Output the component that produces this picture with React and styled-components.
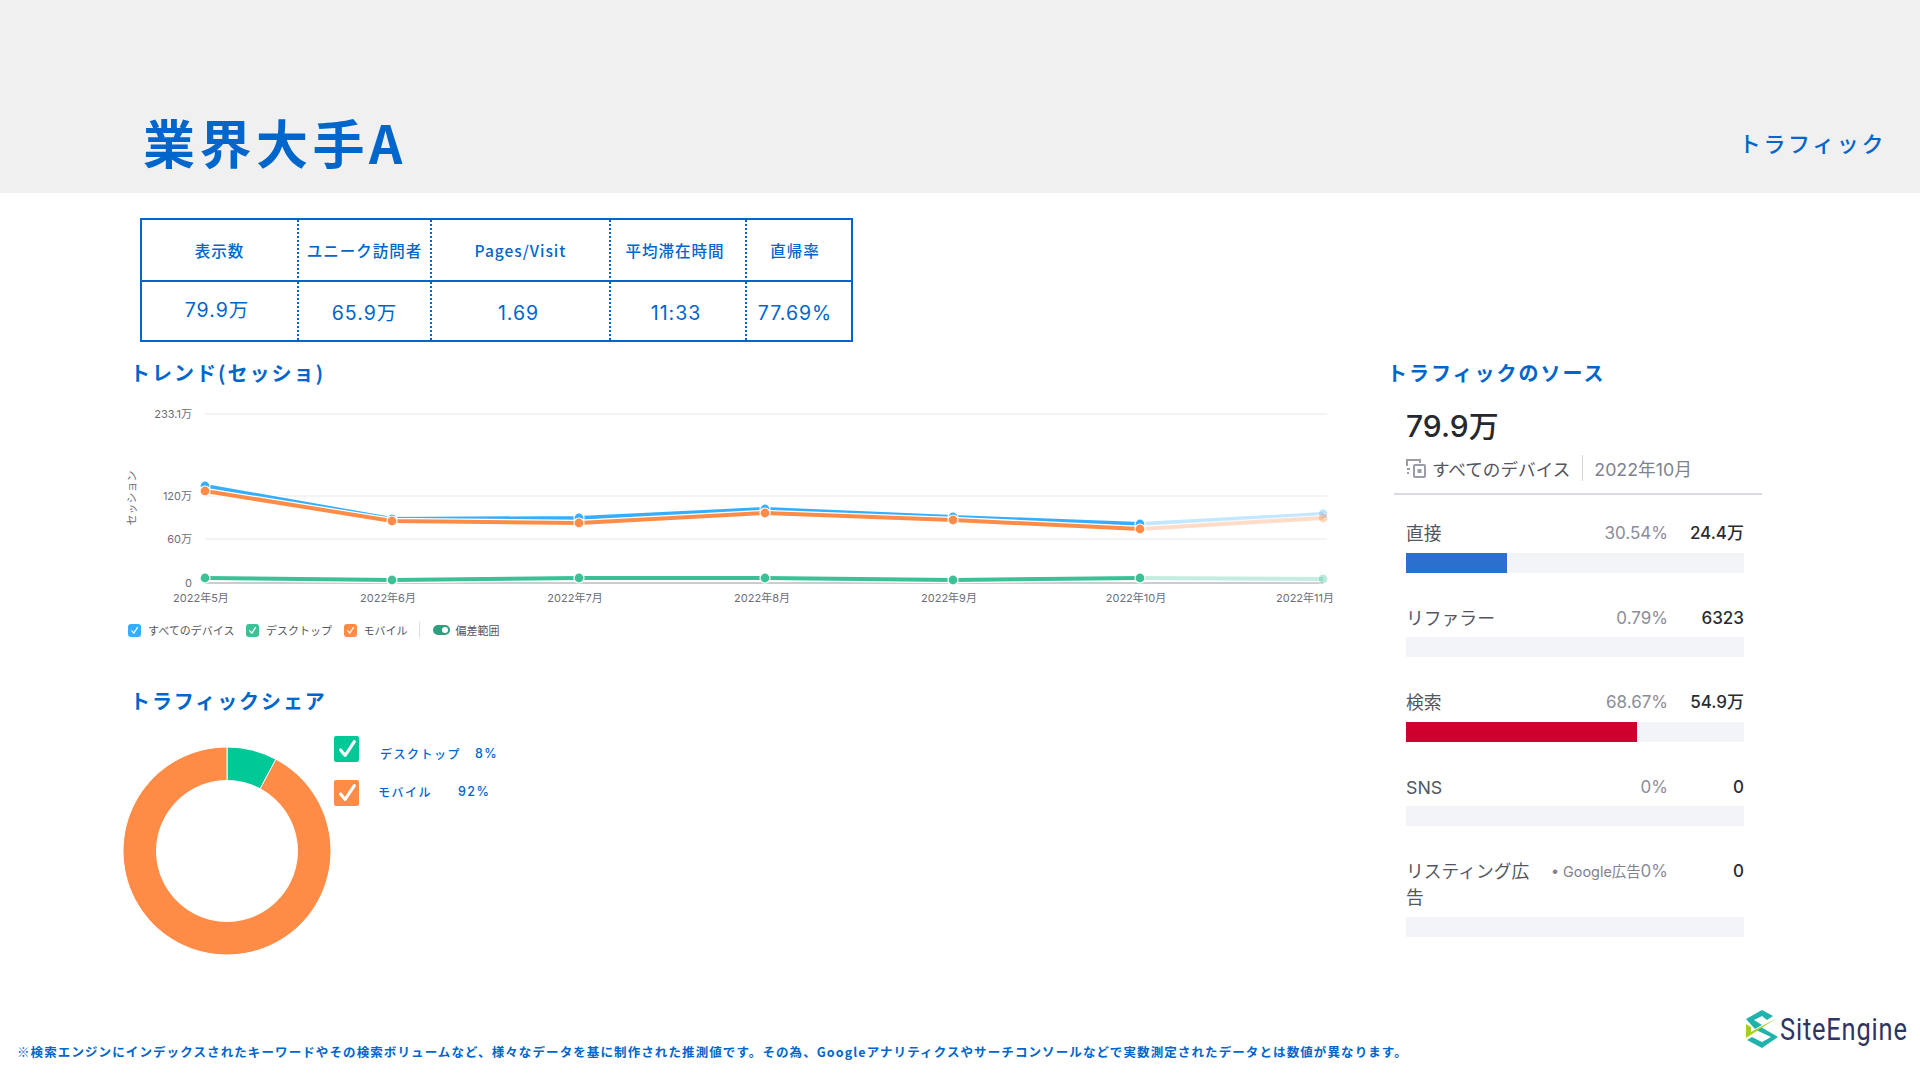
import React from "react";
import styled, { createGlobalStyle } from "styled-components";

const BLUE = "#0066cc";
const CJK = `"Noto Sans CJK JP"`;
const UI = `Inter, "Noto Sans CJK JP", sans-serif`;

const Global = createGlobalStyle`
  html, body { margin: 0; padding: 0; background: #fff; }
  body { font-family: ${CJK}, sans-serif; }
  #root { width: 1920px; height: 1080px; overflow: hidden; }
`;

const Page = styled.div`
  width: 1920px;
  height: 1080px;
  display: flex;
  flex-direction: column;
  background: #fff;
  color: ${BLUE};
`;

const Header = styled.header`
  height: 193px;
  flex: none;
  background: #f0f0f0;
  padding: 0 34px 0 143px;
  box-sizing: border-box;
  display: flex;
  align-items: flex-end;
  justify-content: space-between;
`;
const Title = styled.h1`
  margin: 0 0 21px;
  font-size: 52px;
  line-height: 60px;
  letter-spacing: 4.5px;
  font-weight: 700;
`;
const HeaderTag = styled.div`
  margin-bottom: 35px;
  font-size: 22px;
  line-height: 32px;
  letter-spacing: 2.6px;
  font-weight: 500;
`;

const Metrics = styled.div`
  margin: 25px 0 0 140px;
  width: 713px;
  height: 124px;
  flex: none;
  box-sizing: border-box;
  border: 2px solid ${BLUE};
  display: grid;
  grid-template-columns: 155px 133px 179px 136px 1fr;
  grid-template-rows: 62px 1fr;
`;
const HeadCell = styled.div`
  display: flex;
  align-items: center;
  justify-content: center;
  font-size: 15.5px;
  font-weight: 500;
  letter-spacing: 1px;
  padding-right: ${(p) => p.$shift || 0}px;
  border-bottom: 2px solid ${BLUE};
  border-left: ${(p) => (p.$first ? "none" : `2px dotted ${BLUE}`)};
`;
const ValueCell = styled.div`
  display: flex;
  align-items: center;
  justify-content: center;
  font-family: ${UI};
  font-size: 19.5px;
  letter-spacing: 1px;
  padding-bottom: ${(p) => p.$lift || 0}px;
  padding-top: ${(p) => p.$drop || 0}px;
  padding-right: ${(p) => p.$shift || 0}px;
  box-sizing: border-box;
  border-left: ${(p) => (p.$first ? "none" : `2px dotted ${BLUE}`)};
`;

const Main = styled.div`
  display: flex;
  margin-top: 15px;
  flex: 1;
  min-height: 0;
`;
const LeftCol = styled.div`
  width: 1387px;
  flex: none;
  box-sizing: border-box;
  padding-left: 126px;
`;
const RightCol = styled.div`
  width: 400px;
  flex: none;
`;
const SectionTitle = styled.h2`
  margin: 0;
  font-size: 20px;
  line-height: 32px;
  font-weight: 600;
  letter-spacing: ${(p) => p.$ls || 1}px;
  padding-left: ${(p) => p.$indent || 0}px;
`;

const ChartSvg = styled.svg`
  display: block;
  width: 1220px;
  height: 219px;
  margin-top: 8px;
  font-family: ${UI};
`;
const Legend = styled.div`
  display: flex;
  align-items: center;
  margin-top: 4px;
  height: 20px;
  padding-left: 2px;
  font-family: ${UI};
  font-size: 11px;
  color: #54565f;
`;
const LegendItem = styled.div`
  display: flex;
  align-items: center;
  gap: ${(p) => p.$gap || 6.5}px;
  margin-right: 12px;
`;
const LegendBox = styled.span`
  width: 13px;
  height: 13px;
  border-radius: 3px;
  background: ${(p) => p.$color};
  display: inline-flex;
  align-items: center;
  justify-content: center;
`;
const LegendDivider = styled.span`
  width: 1px;
  height: 16px;
  background: #dcdee3;
  margin-right: 13px;
`;
const Toggle = styled.span`
  width: 17px;
  height: 10px;
  border-radius: 5px;
  background: #2f9e7e;
  position: relative;
  &::after {
    content: "";
    position: absolute;
    right: 2px;
    top: 2px;
    width: 6px;
    height: 6px;
    border-radius: 50%;
    background: #fff;
  }
`;

const ShareSection = styled.div`
  margin-top: 45px;
`;
const ShareBody = styled.div`
  display: flex;
  margin-left: -4px;
`;
const Donut = styled.svg`
  display: block;
  width: 210px;
  height: 210px;
  margin-top: 29px;
  flex: none;
`;
const ShareLegend = styled.div`
  margin-left: 2px;
  margin-top: 19px;
  display: flex;
  flex-direction: column;
  gap: 18px;
`;
const ShareRow = styled.div`
  display: flex;
  align-items: center;
  height: 26px;
  font-size: 12px;
  font-weight: 500;
  letter-spacing: 1.5px;
`;
const ShareBox = styled.span`
  width: 25px;
  height: 26px;
  border-radius: 2px;
  background: ${(p) => p.$color};
  display: inline-flex;
  align-items: center;
  justify-content: center;
  flex: none;
`;
const ShareName = styled.span`
  margin-left: ${(p) => p.$gap}px;
  width: ${(p) => p.$w}px;
  position: relative;
  top: ${(p) => p.$dy}px;
`;
const SharePct = styled.span`
  font-family: ${UI};
  font-size: 12.5px;
  position: relative;
  top: ${(p) => p.$dy}px;
`;

const Panel = styled.div`
  margin-top: 17px;
  width: 368px;
  margin-left: 7px;
`;
const PanelHead = styled.div`
  padding: 0 12px 11px;
  border-bottom: 2px solid #d9dbe1;
`;
const BigValue = styled.div`
  font-family: ${UI};
  font-size: 30px;
  line-height: 40px;
  font-weight: 550;
  color: #26282e;
`;
const SubRow = styled.div`
  display: flex;
  align-items: center;
  margin-top: 8px;
  height: 28px;
  font-family: ${UI};
  font-size: 17.6px;
`;
const DeviceName = styled.span`
  color: #54565f;
  margin-left: 6px;
`;
const SubDivider = styled.span`
  width: 1px;
  height: 26px;
  background: #d4d6dc;
  margin: 0 11px 0 12px;
`;
const Period = styled.span`
  color: #7f8290;
  font-size: 17.8px;
`;
const Rows = styled.div`
  padding: 0 18px 0 12px;
  margin-top: 26px;
`;
const SourceRow = styled.div`
  margin-bottom: 33px;
`;
const SourceHead = styled.div`
  display: grid;
  grid-template-columns: 126px 1fr 76px;
  font-family: ${UI};
  font-size: 17px;
  line-height: 25.6px;
  align-items: start;
`;
const SourceName = styled.div`
  color: #54565f;
  font-size: 17.8px;
`;
const SourcePct = styled.div`
  color: #8b8d99;
  text-align: right;
  display: flex;
  justify-content: flex-end;
  align-items: baseline;
`;
const SubSource = styled.span`
  font-size: 14.4px;
  color: #7f8290;
  flex: 1;
  text-align: right;
  white-space: nowrap;
`;
const SourceValue = styled.div`
  color: #2a2c33;
  font-weight: 450;
  text-align: right;
`;
const Track = styled.div`
  height: 20px;
  background: #f3f4f8;
  margin-top: 6px;
`;
const Fill = styled.div`
  height: 100%;
  background: ${(p) => p.$color};
`;

const Footer = styled.div`
  height: 80px;
  flex: none;
  display: flex;
  align-items: flex-start;
  justify-content: space-between;
`;
const Note = styled.div`
  margin: 43px 0 0 17px;
  font-size: 12.5px;
  line-height: 18px;
  font-weight: 700;
  letter-spacing: 1.1px;
  white-space: nowrap;
`;
const Logo = styled.div`
  display: flex;
  align-items: center;
  gap: 0;
  margin-top: 9px;
  width: 175px;
  flex: none;
`;
const LogoIcon = styled.svg`
  flex: none;
  display: block;
`;
const LogoText = styled.span`
  font-family: Roboto, sans-serif;
  font-size: 31px;
  line-height: 40px;
  letter-spacing: 1px;
  color: #2d3560;
  display: inline-block;
  transform: scaleX(0.82);
  transform-origin: left center;
  white-space: nowrap;
`;

const xs = [205, 392, 579, 765, 953, 1140, 1323].map((x) => x - 126);
const Y = (y) => y - 396;
const series = [
  { c: "#36aeff", ys: [485, 518, 517, 508, 516, 523, 513] },
  { c: "#ff8c46", ys: [490, 520, 522, 512, 519, 528, 517] },
  { c: "#3cc096", ys: [577, 579, 577, 577, 579, 577, 578] },
];
const gridLines = [
  { y: 413, label: "233.1万" },
  { y: 495, label: "120万" },
  { y: 538, label: "60万" },
];
const xLabels = [
  [201, "2022年5月"],
  [388, "2022年6月"],
  [575, "2022年7月"],
  [762, "2022年8月"],
  [949, "2022年9月"],
  [1136, "2022年10月"],
  [1305, "2022年11月"],
];

const Check = ({ size, sw = 2 }) => (
  <svg width={size} height={size} viewBox="0 0 24 24" fill="none" stroke="#fff" strokeWidth={sw} strokeLinecap="round" strokeLinejoin="round">
    <path d="M5 13l5 6L20 4" />
  </svg>
);

function TrendChart() {
  const pts = (s, a, b) => s.ys.slice(a, b).map((y, i) => `${xs[a + i]},${Y(y)}`).join(" ");
  return (
    <ChartSvg viewBox="0 0 1220 219">
      {gridLines.map((g) => (
        <g key={g.y}>
          <line x1="79" x2="1201" y1={Y(g.y)} y2={Y(g.y)} stroke="#eef1f3" strokeWidth="1.5" />
          <text x="66" y={Y(g.y) + 4} textAnchor="end" fontSize="11" fill="#6c6e79">{g.label}</text>
        </g>
      ))}
      <line x1="79" x2="1197" y1={Y(582)} y2={Y(582)} stroke="#c9cdd1" strokeWidth="2" />
      <text x="66" y={Y(582) + 4} textAnchor="end" fontSize="11" fill="#6c6e79">0</text>
      <text transform={`translate(6 ${Y(497)}) rotate(-90)`} textAnchor="middle" dominantBaseline="central" fontSize="11" fill="#6c6e79">セッション</text>
      {xLabels.map(([x, t]) => (
        <text key={t} x={x - 126} y={Y(601)} textAnchor="middle" fontSize="11" fill="#6c6e79">{t}</text>
      ))}
      {series.map((s) => (
        <g key={s.c}>
          <polyline points={pts(s, 5, 7)} fill="none" stroke="#fff" strokeWidth="6.5" opacity="0.7" />
          <polyline points={pts(s, 5, 7)} fill="none" stroke={s.c} strokeWidth="4" opacity="0.3" />
          <polyline points={pts(s, 0, 6)} fill="none" stroke="#fff" strokeWidth="6.5" />
          <polyline points={pts(s, 0, 6)} fill="none" stroke={s.c} strokeWidth="4" />
          {s.ys.map((y, i) => (
            <circle key={i} cx={xs[i]} cy={Y(y)} r="5" fill={s.c} stroke="#fff" strokeWidth="1.2" opacity={i === 6 ? 0.35 : 1} />
          ))}
        </g>
      ))}
    </ChartSvg>
  );
}

const cx = 105, cy = 105, ro = 104, ri = 70.5;
const polar = (r, a) => [cx + r * Math.sin(a), cy - r * Math.cos(a)];
const ringPath = (a0, a1) => {
  const large = a1 - a0 > Math.PI ? 1 : 0;
  const [x0, y0] = polar(ro, a0), [x1, y1] = polar(ro, a1), [x2, y2] = polar(ri, a1), [x3, y3] = polar(ri, a0);
  return `M${x0} ${y0}A${ro} ${ro} 0 ${large} 1 ${x1} ${y1}L${x2} ${y2}A${ri} ${ri} 0 ${large} 0 ${x3} ${y3}Z`;
};

const LogoMark = () => (
  <LogoIcon width="35" height="41" viewBox="5 4 35 41">
    <path d="M6 14L22 5l11 6-6 4-5-4-8 4 8 5-7 4z" fill="#1fb3ac" />
    <path d="M21 22l17 10-16 11-15-8 5-3 10 5 9-5-15-7z" fill="#1fb3ac" />
    <path d="M6 19l5 3v5L37 13 6 33z" fill="#a8cf1e" />
  </LogoIcon>
);

const DeviceIcon = () => (
  <svg width="20" height="20" viewBox="0 0 20 20" fill="none" stroke="#9a9ca8" strokeWidth="2">
    <path d="M1 8V2h13v3" />
    <path d="M1 11h3M1 15h2" />
    <rect x="8" y="7" width="11" height="12" rx="1" />
    <path d="M12.5 12h2v2h-2z" />
  </svg>
);

const metrics = [
  { h: "表示数", v: "79.9万", lift: 6, vs: 5, hs: 0 },
  { h: "ユニーク訪問者", v: "65.9万", vs: 0, hs: 0 },
  { h: "Pages/Visit", v: "1.69", vs: 4, hs: 0, drop: 3 },
  { h: "平均滞在時間", v: "11:33", vs: 4, hs: 6, drop: 4 },
  { h: "直帰率", v: "77.69%", vs: 8, hs: 8, drop: 4 },
];

const sources = [
  { n: "直接", p: "30.54%", v: "24.4万", w: 30, c: "#2b6fcf" },
  { n: "リファラー", p: "0.79%", v: "6323", w: 0 },
  { n: "検索", p: "68.67%", v: "54.9万", w: 68.2, c: "#d0002e" },
  { n: "SNS", p: "0%", v: "0", w: 0 },
  { n: "リスティング広告", sub: "• Google広告", p: "0%", v: "0", w: 0 },
];

export default function App() {
  return (
    <Page>
      <Global />
      <Header>
        <Title>業界大手A</Title>
        <HeaderTag>トラフィック</HeaderTag>
      </Header>
      <Metrics>
        {metrics.map((m, i) => (
          <HeadCell key={m.h} $first={i === 0} $shift={m.hs}>{m.h}</HeadCell>
        ))}
        {metrics.map((m, i) => (
          <ValueCell key={m.h} $first={i === 0} $lift={m.lift} $drop={m.drop} $shift={m.vs}>{m.v}</ValueCell>
        ))}
      </Metrics>
      <Main>
        <LeftCol>
          <SectionTitle $ls={2} $indent={4}>トレンド(セッショ)</SectionTitle>
          <TrendChart />
          <Legend>
            <LegendItem $gap={7}><LegendBox $color="#36aeff"><Check size={9} sw={3.5} /></LegendBox>すべてのデバイス</LegendItem>
            <LegendItem><LegendBox $color="#3cc096"><Check size={9} sw={3.5} /></LegendBox>デスクトップ</LegendItem>
            <LegendItem><LegendBox $color="#ff8c46"><Check size={9} sw={3.5} /></LegendBox>モバイル</LegendItem>
            <LegendDivider />
            <LegendItem $gap={5}><Toggle />偏差範囲</LegendItem>
          </Legend>
          <ShareSection>
            <SectionTitle $ls={1.9} $indent={4}>トラフィックシェア</SectionTitle>
            <ShareBody>
              <Donut viewBox="0 0 210 210">
                <path d={ringPath(0, 0.49)} fill="#00c896" stroke="#fff" strokeWidth="1" />
                <path d={ringPath(0.49, Math.PI * 2 - 0.0001)} fill="#ff8c46" stroke="#fff" strokeWidth="1" />
              </Donut>
              <ShareLegend>
                <ShareRow>
                  <ShareBox $color="#00c896"><Check size={22} sw={3.4} /></ShareBox>
                  <ShareName $gap={21} $w={95} $dy={4}>デスクトップ</ShareName>
                  <SharePct $dy={4}>8%</SharePct>
                </ShareRow>
                <ShareRow>
                  <ShareBox $color="#ff8c46"><Check size={22} sw={3.4} /></ShareBox>
                  <ShareName $gap={19} $w={80} $dy={-2}>モバイル</ShareName>
                  <SharePct $dy={-2}>92%</SharePct>
                </ShareRow>
              </ShareLegend>
            </ShareBody>
          </ShareSection>
        </LeftCol>
        <RightCol>
          <SectionTitle $ls={2}>トラフィックのソース</SectionTitle>
          <Panel>
            <PanelHead>
              <BigValue>79.9万</BigValue>
              <SubRow>
                <DeviceIcon />
                <DeviceName>すべてのデバイス</DeviceName>
                <SubDivider />
                <Period>2022年10月</Period>
              </SubRow>
            </PanelHead>
            <Rows>
              {sources.map((s) => (
                <SourceRow key={s.n}>
                  <SourceHead>
                    <SourceName>{s.n}</SourceName>
                    <SourcePct>
                      {s.sub && <SubSource>{s.sub}</SubSource>}
                      {s.p}
                    </SourcePct>
                    <SourceValue>{s.v}</SourceValue>
                  </SourceHead>
                  <Track>
                    {s.w > 0 && <Fill $color={s.c} style={{ width: `${s.w}%` }} />}
                  </Track>
                </SourceRow>
              ))}
            </Rows>
          </Panel>
        </RightCol>
      </Main>
      <Footer>
        <Note>※検索エンジンにインデックスされたキーワードやその検索ボリュームなど、様々なデータを基に制作された推測値です。その為、Googleアナリティクスやサーチコンソールなどで実数測定されたデータとは数値が異なります。</Note>
        <Logo>
          <LogoMark />
          <LogoText>SiteEngine</LogoText>
        </Logo>
      </Footer>
    </Page>
  );
}
